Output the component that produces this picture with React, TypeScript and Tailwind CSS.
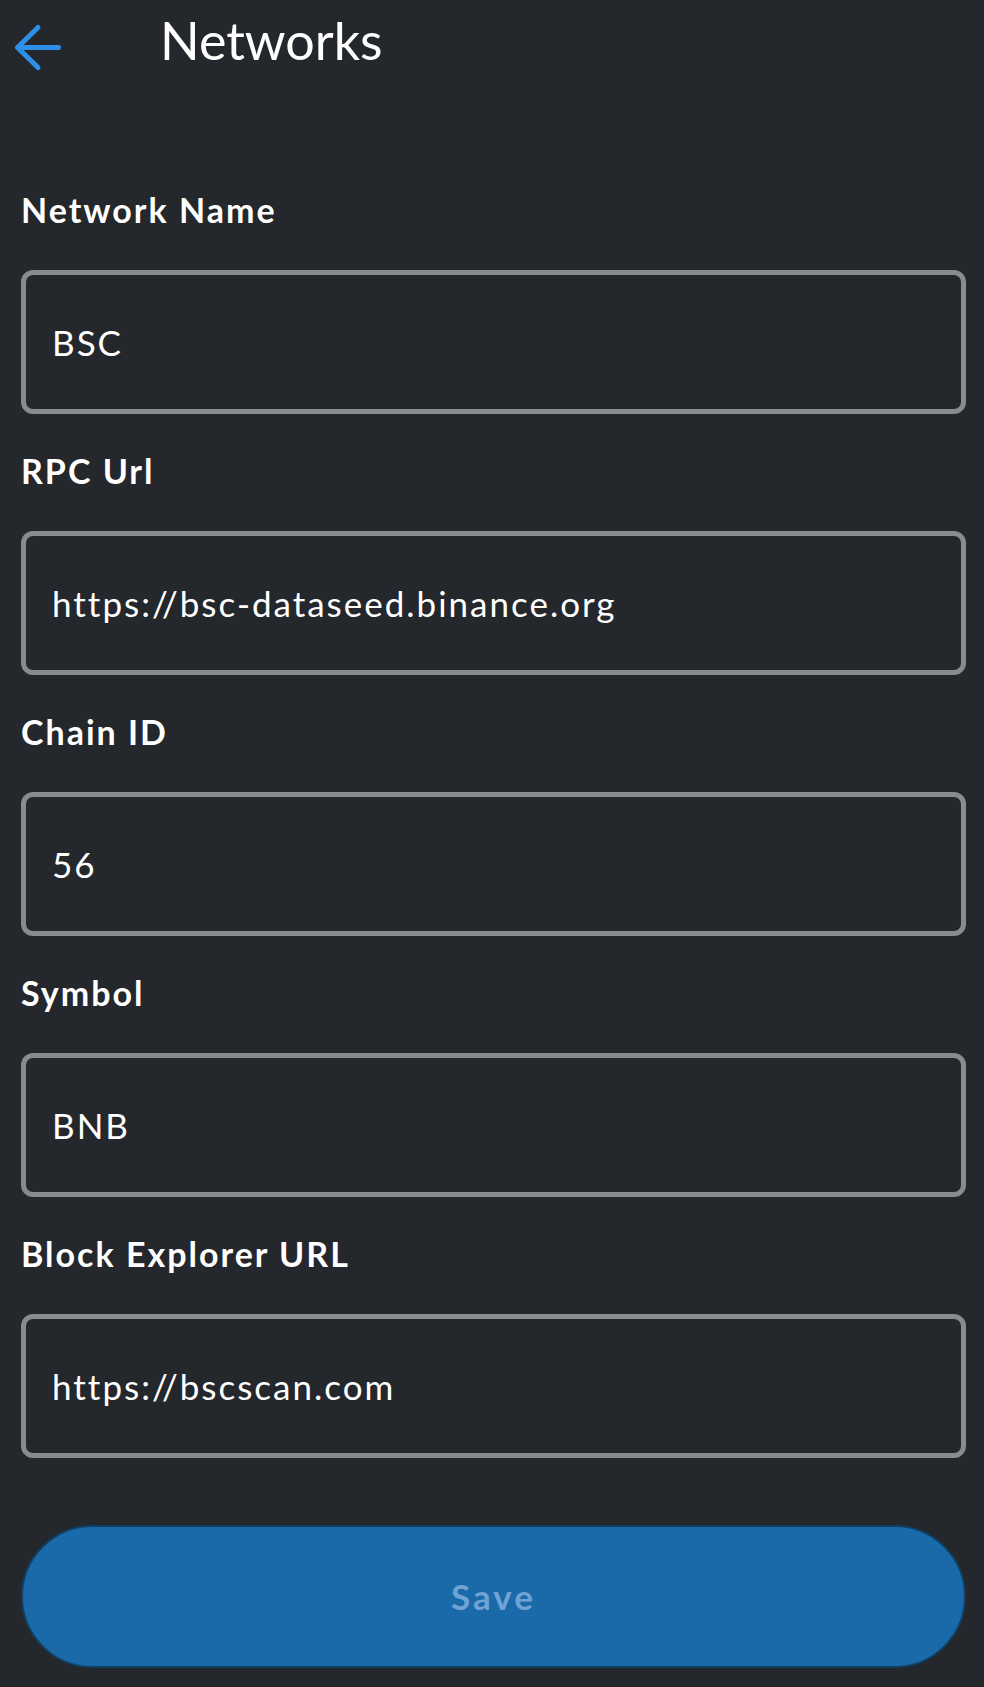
import React from "react";

const fields = [
  { label: "Network Name", value: "BSC" },
  { label: "RPC Url", value: "https://bsc-dataseed.binance.org" },
  { label: "Chain ID", value: "56" },
  { label: "Symbol", value: "BNB" },
  { label: "Block Explorer URL", value: "https://bscscan.com" },
];

const BackArrow = () => (
  <svg width="50" height="50" viewBox="0 0 50 50" fill="none" className="mt-[13px] shrink-0">
    <path
      d="M26 5.5 L5.5 25.5 L26 45.5 M5.5 25.5 H46.5"
      stroke="#2d8fe6"
      strokeWidth="5"
      strokeLinecap="round"
      strokeLinejoin="round"
    />
  </svg>
);

const Field = ({ label, value }: { label: string; value: string }) => (
  <div className="flex flex-col">
    <label className="text-[34px] leading-[40px] font-bold tracking-[2px] text-white">{label}</label>
    <div className="mt-[40px] h-[144px] flex items-center px-[26px] rounded-[12px] border-[5px] border-[#888c91] bg-[#24272b]">
      <span className="text-[35px] leading-[42px] tracking-[2px] text-white">{value}</span>
    </div>
  </div>
);

export default function App() {
  return (
    <div
      className="min-h-[1687px] w-full bg-[#24272b] text-white"
      style={{ fontFamily: "Lato, 'Noto Sans', sans-serif" }}
    >
      <div className="flex items-start pt-[9px] pl-[12px]">
        <BackArrow />
        <h1 className="ml-[98px] text-[52px] leading-[62px] font-normal text-white">Networks</h1>
      </div>

      <div className="pl-[21px] pr-[18px] mt-[118px] flex flex-col gap-[37px]">
        {fields.map((f) => (
          <Field key={f.label} label={f.label} value={f.value} />
        ))}
      </div>

      <div className="pl-[21px] pr-[18px] mt-[67px]">
        <button className="w-full h-[143px] rounded-full bg-[#1a6aa9] border-2 border-[#113f61] text-[35px] font-bold tracking-[3px] text-[#6ea3d4]">
          Save
        </button>
      </div>
    </div>
  );
}
